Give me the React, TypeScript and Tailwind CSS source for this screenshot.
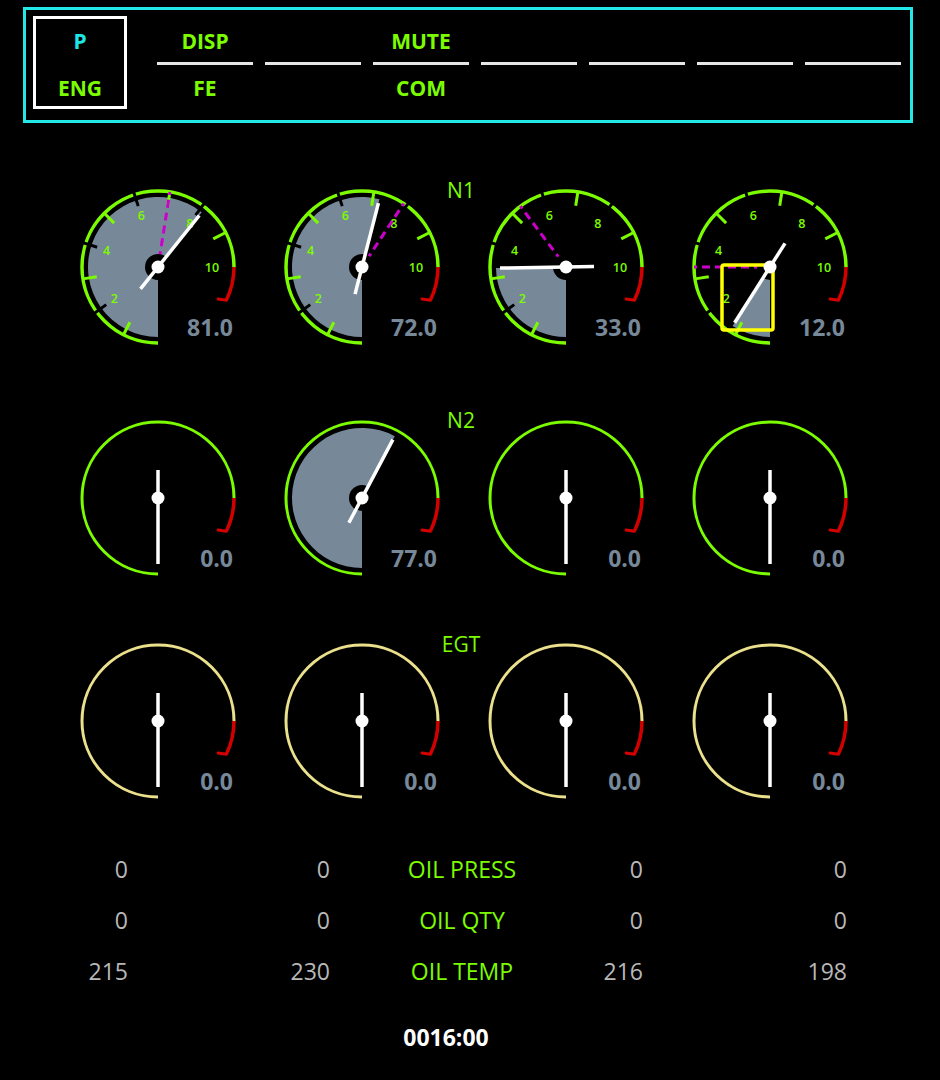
const GREEN = "#7cfc00";

const pt = (cx: number, cy: number, r: number, deg: number) => {
  const a = (deg * Math.PI) / 180;
  return [cx + r * Math.sin(a), cy - r * Math.cos(a)];
};

// 0% sits straight down, 100% at 3 o'clock
const ang = (v: number) => -180 + v * 2.7;

const arc = (cx: number, cy: number, r: number, a1: number, a2: number) => {
  const [x1, y1] = pt(cx, cy, r, a1);
  const [x2, y2] = pt(cx, cy, r, a2);
  const large = a2 - a1 > 180 ? 1 : 0;
  return `M ${x1} ${y1} A ${r} ${r} 0 ${large} 1 ${x2} ${y2}`;
};

const pie = (cx: number, cy: number, r: number, a1: number, a2: number) => {
  const [x1, y1] = pt(cx, cy, r, a1);
  const [x2, y2] = pt(cx, cy, r, a2);
  const large = a2 - a1 > 180 ? 1 : 0;
  return `M ${cx} ${cy} L ${x1} ${y1} A ${r} ${r} 0 ${large} 1 ${x2} ${y2} Z`;
};

type GaugeProps = {
  value: number;
  type: "n1" | "n2" | "egt";
  bug?: number;
  selected?: boolean;
};

const Gauge = ({ value, type, bug, selected }: GaugeProps) => {
  const cx = 102;
  const cy = 90;
  const R = 76;
  const a = ang(value);
  const arcColor = type === "egt" ? "#ebe08c" : GREEN;
  const [tx, ty] = pt(cx, cy, 66, a);
  const [bx, by] = pt(cx, cy, 28, a + 180);
  const [rx, ry] = pt(cx, cy, R, 116);
  const [hx, hy] = pt(cx, cy, R - 8, 118);

  return (
    <svg width="204" height="180" viewBox="0 0 204 180" className="block">
      {value > 0 && <path d={pie(cx, cy, 70, -180, a)} fill="#778899" />}
      <path d={arc(cx, cy, R, -180, 90)} fill="none" stroke={arcColor} strokeWidth={type === "n1" ? 3.5 : 3} />
      <path d={arc(cx, cy, R, 90, 116)} fill="none" stroke="#d40000" strokeWidth="3.5" />
      <line x1={rx} y1={ry} x2={hx} y2={hy} stroke="#d40000" strokeWidth="3" strokeLinecap="round" />

      {type === "n1" && (
        <g>
          {[10, 30, 50, 70, 90].map((v) => {
            const [x1, y1] = pt(cx, cy, R, ang(v));
            const [x2, y2] = pt(cx, cy, R - 14, ang(v));
            return <line key={v} x1={x1} y1={y1} x2={x2} y2={y2} stroke={GREEN} strokeWidth="3" />;
          })}
          {[20, 40, 60, 80].map((v) => {
            const [x1, y1] = pt(cx, cy, R + 3, ang(v));
            const [x2, y2] = pt(cx, cy, R - 12, ang(v));
            return <line key={v} x1={x1} y1={y1} x2={x2} y2={y2} stroke="#000" strokeWidth="3" />;
          })}
          {[2, 4, 6, 8, 10].map((n) => {
            const [x, y] = pt(cx, cy, 54, ang(n * 10));
            return (
              <text key={n} x={x} y={y + 4.5} textAnchor="middle" fill={GREEN} fontSize="12.5" fontWeight="600">
                {n}
              </text>
            );
          })}
        </g>
      )}

      {bug !== undefined && (() => {
        const [x1, y1] = pt(cx, cy, 8, ang(bug));
        const [x2, y2] = pt(cx, cy, R, ang(bug));
        return <line x1={x1} y1={y1} x2={x2} y2={y2} stroke="#cc00cc" strokeWidth="3" strokeDasharray="8 5" />;
      })()}

      {value > 0 && <circle cx={cx} cy={cy} r="13" fill="#000" />}

      {selected && (
        <rect x={cx - 48} y={cy - 2} width="51" height="65" rx="2" fill="none" stroke="#ffff00" strokeWidth="3.5" />
      )}

      <line x1={bx} y1={by} x2={tx} y2={ty} stroke="#fff" strokeWidth="3.5" />
      <circle cx={cx} cy={cy} r="6.5" fill="#fff" />

      <text x={cx + 75} y={cy + 69} textAnchor="end" fill="#778899" fontSize="23" fontWeight="700">
        {value.toFixed(1)}
      </text>
    </svg>
  );
};

const Section = ({ label, top, children }: { label: string; top: string; children: React.ReactNode }) => (
  <div className={top}>
    <div className="ml-[411px] h-[24px] w-[100px] text-center text-[21px] leading-[24px] text-[#7cfc00]">{label}</div>
    {children}
  </div>
);

const headerCols = [
  { top: "DISP", bottom: "FE" },
  { top: "", bottom: "" },
  { top: "MUTE", bottom: "COM" },
  { top: "", bottom: "" },
  { top: "", bottom: "" },
  { top: "", bottom: "" },
  { top: "", bottom: "" },
];

const oilRows = [
  { label: "OIL PRESS", vals: ["0", "0", "0", "0"] },
  { label: "OIL QTY", vals: ["0", "0", "0", "0"] },
  { label: "OIL TEMP", vals: ["215", "230", "216", "198"] },
];

export default function App() {
  return (
    <div className="h-[1080px] w-[940px] overflow-hidden bg-black font-['Open_Sans',sans-serif]">
      {/* softkey header */}
      <div className="ml-[23px] mt-[7px] flex h-[116px] w-[890px] items-start border-[3px] border-[#24e8e8]">
        <div className="ml-[7px] mt-[6px] flex h-[93px] w-[94px] flex-col items-center gap-[23px] border-[3px] border-white pt-[10px] text-[21px] font-bold leading-[24px]">
          <span className="text-[#1ee6e6]">P</span>
          <span className="text-[#7cfc00]">ENG</span>
        </div>
        <div className="ml-[30px] flex gap-[12px]">
          {headerCols.map((c, i) => (
            <div key={i} className="flex w-[96px] flex-col items-center pt-[19px] text-[21px] font-bold leading-[24px] text-[#7cfc00]">
              <span className="h-[24px]">{c.top}</span>
              <div className="mt-[9px] h-[3px] w-full bg-[#e6e6e6]" />
              <span className="mt-[11px] h-[24px]">{c.bottom}</span>
            </div>
          ))}
        </div>
      </div>

      <Section label="N1" top="mt-[55px]">
        <div className="-mt-[25px] grid grid-cols-[repeat(4,204px)] pl-[56px]">
          <Gauge value={81} type="n1" bug={70} />
          <Gauge value={72} type="n1" bug={79} />
          <Gauge value={33} type="n1" bug={53} />
          <Gauge value={12} type="n1" bug={33.3} selected />
        </div>
      </Section>

      <Section label="N2" top="mt-[51px]">
        <div className="-mt-[24px] grid grid-cols-[repeat(4,204px)] pl-[56px]">
          <Gauge value={0} type="n2" />
          <Gauge value={77} type="n2" />
          <Gauge value={0} type="n2" />
          <Gauge value={0} type="n2" />
        </div>
      </Section>

      <Section label="EGT" top="mt-[44px]">
        <div className="-mt-[25px] grid grid-cols-[repeat(4,204px)] pl-[56px]">
          <Gauge value={0} type="egt" />
          <Gauge value={0} type="egt" />
          <Gauge value={0} type="egt" />
          <Gauge value={0} type="egt" />
        </div>
      </Section>

      {/* oil readouts */}
      <div className="mt-[33px] pl-[28px] text-[23px] leading-[51px]">
        {oilRows.map((r) => (
          <div key={r.label} className="flex h-[51px]">
            <div className="w-[100px] text-right text-[#b8b8b8]">{r.vals[0]}</div>
            <div className="w-[202px] text-right text-[#b8b8b8]">{r.vals[1]}</div>
            <div className="w-[264px] text-center text-[#7cfc00]">{r.label}</div>
            <div className="w-[49px] text-right text-[#b8b8b8]">{r.vals[2]}</div>
            <div className="w-[204px] text-right text-[#b8b8b8]">{r.vals[3]}</div>
          </div>
        ))}
      </div>

      <div className="ml-[396px] mt-[25px] h-[30px] w-[100px] text-center text-[23px] font-bold leading-[30px] text-white">
        0016:00
      </div>
    </div>
  );
}
